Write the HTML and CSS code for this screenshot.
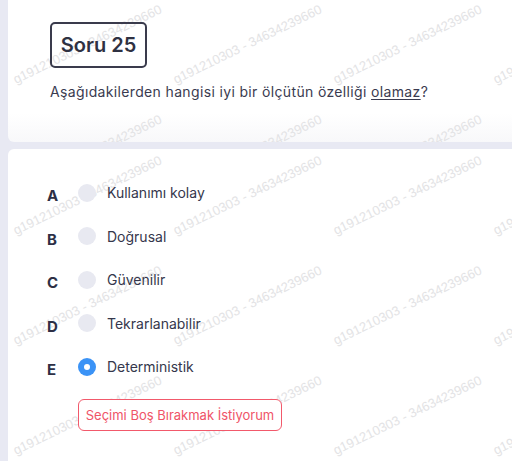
FILE: index.html
```html
<!DOCTYPE html>
<html lang="tr">
<head>
<meta charset="utf-8">
<title>Soru 25</title>
<link rel="stylesheet" href="styles.css">
</head>
<body>
<div class="page">
  <section class="card card-head">
    <div class="wm">
      <div class="tile"><span>g191210303 - 34634239660</span></div>
      <div class="tile"><span>g191210303 - 34634239660</span></div>
      <div class="tile"><span>g191210303 - 34634239660</span></div>
      <div class="tile"><span>g191210303 - 34634239660</span></div>
      <div class="tile"><span>g191210303 - 34634239660</span></div>
      <div class="tile"><span>g191210303 - 34634239660</span></div>
      <div class="tile"><span>g191210303 - 34634239660</span></div>
      <div class="tile"><span>g191210303 - 34634239660</span></div>
    </div>
    <div class="content head">
      <div class="q-no">Soru 25</div>
      <p class="q-text">Aşağıdakilerden hangisi iyi bir ölçütün özelliği <u>olamaz</u>?</p>
    </div>
  </section>
  <section class="card card-opts">
    <div class="wm">
      <div class="tile"><span>g191210303 - 34634239660</span></div>
      <div class="tile"><span>g191210303 - 34634239660</span></div>
      <div class="tile"><span>g191210303 - 34634239660</span></div>
      <div class="tile"><span>g191210303 - 34634239660</span></div>
      <div class="tile"><span>g191210303 - 34634239660</span></div>
      <div class="tile"><span>g191210303 - 34634239660</span></div>
      <div class="tile"><span>g191210303 - 34634239660</span></div>
      <div class="tile"><span>g191210303 - 34634239660</span></div>
      <div class="tile"><span>g191210303 - 34634239660</span></div>
      <div class="tile"><span>g191210303 - 34634239660</span></div>
      <div class="tile"><span>g191210303 - 34634239660</span></div>
      <div class="tile"><span>g191210303 - 34634239660</span></div>
    </div>
    <div class="content opts">
      <ul class="options">
        <li class="opt"><span class="letter">A</span><span class="radio"></span><span class="label">Kullanımı kolay</span></li>
        <li class="opt"><span class="letter">B</span><span class="radio"></span><span class="label">Doğrusal</span></li>
        <li class="opt"><span class="letter">C</span><span class="radio"></span><span class="label">Güvenilir</span></li>
        <li class="opt"><span class="letter">D</span><span class="radio"></span><span class="label">Tekrarlanabilir</span></li>
        <li class="opt"><span class="letter">E</span><span class="radio on"></span><span class="label">Deterministik</span></li>
      </ul>
      <button class="skip" type="button">Seçimi Boş Bırakmak İstiyorum</button>
    </div>
  </section>
</div>
</body>
</html>
```

FILE: styles.css
```css
html, body {
  margin: 0;
  height: 100%;
  overflow: hidden;
}

body {
  background: #e8e9f3;
  font-family: Inter, "Noto Sans", "Liberation Sans", sans-serif;
}

.page {
  padding-left: 8px;
}

.card {
  position: relative;
  background: #fff;
  margin-right: -12px;
  overflow: hidden;
}

.card-head {
  margin-top: -2px;
  height: 144px;
  border-radius: 0 0 0 6px;
  background: linear-gradient(to bottom, #fff 80%, #f8f8fa 100%);
}

.card-opts {
  margin-top: 7px;
  height: 340px;
  border-radius: 6px 0 0 0;
}

.wm {
  position: absolute;
  inset: 0;
  display: grid;
  grid-template-columns: repeat(4, 160px);
  grid-auto-rows: 110px;
}

.tile {
  position: relative;
  overflow: hidden;
}

.tile span {
  position: absolute;
  left: 8px;
  top: 75px;
  font: 13px/14px "Liberation Sans", Arial, sans-serif;
  color: #e3e3e5;
  white-space: nowrap;
  transform-origin: 0 11px;
  transform: rotate(-26deg);
}

.content {
  position: relative;
}

.head {
  padding: 24px 0 0 42px;
}

.q-no {
  box-sizing: border-box;
  width: 97px;
  height: 46px;
  border: 2px solid #3a3b4c;
  border-radius: 5px;
  display: flex;
  align-items: center;
  justify-content: center;
  font-size: 20px;
  font-weight: 600;
  color: #2f3142;
}

.q-text {
  margin: 14px 0 0;
  font-size: 14px;
  line-height: 20px;
  letter-spacing: 0.35px;
  color: #3a3b50;
}

.q-text u {
  text-underline-offset: 2px;
}

.opts {
  padding: 22px 0 0 39px;
}

.options {
  list-style: none;
  margin: 0;
  padding: 0;
}

.opt {
  display: flex;
  align-items: center;
  height: 43.5px;
}

.letter {
  width: 31px;
  font-weight: 700;
  font-size: 15px;
  color: #2d2f45;
  position: relative;
  top: 3px;
}

.radio {
  width: 18px;
  height: 18px;
  border-radius: 50%;
  background: #e8e9f1;
  margin-right: 11px;
  flex: none;
}

.radio.on {
  background: #3b93f6;
  display: flex;
  align-items: center;
  justify-content: center;
}

.radio.on::after {
  content: "";
  width: 6px;
  height: 6px;
  border-radius: 50%;
  background: #fff;
}

.label {
  font-size: 14px;
  color: #35374c;
}

.skip {
  display: block;
  margin: 10px 0 0 31px;
  width: 204px;
  height: 32px;
  border: 1px solid #f2596b;
  border-radius: 6px;
  background: #fff;
  color: #ef5468;
  font-family: Inter, "Noto Sans", sans-serif;
  font-size: 13px;
  padding: 0;
}
```
